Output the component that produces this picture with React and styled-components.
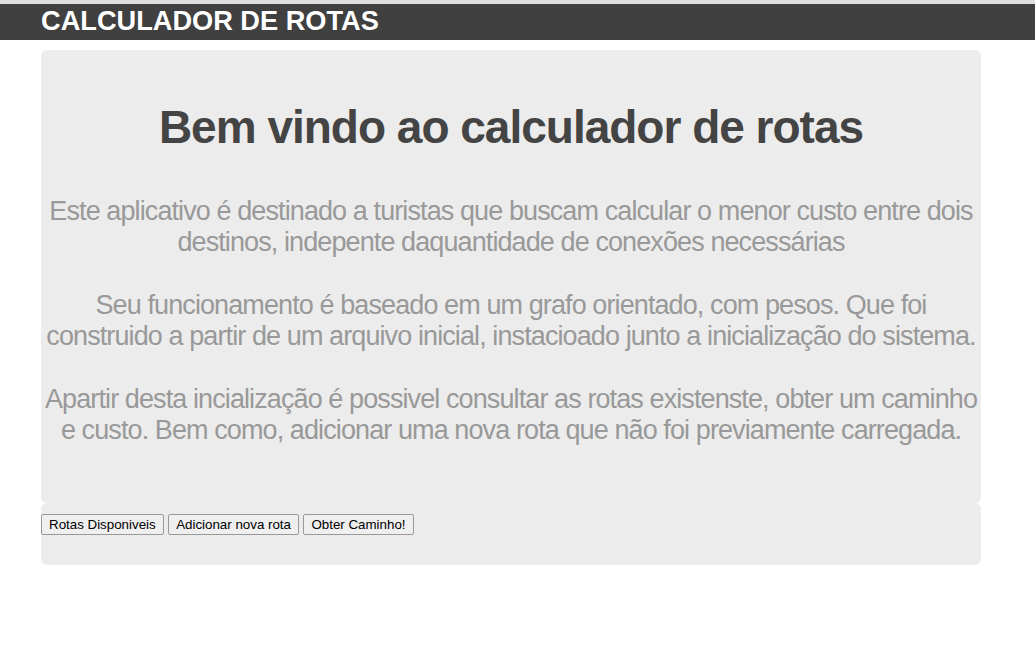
import React from 'react'
import styled, { createGlobalStyle } from 'styled-components'

const GlobalStyle = createGlobalStyle`
	body {
		margin: 0;
		font-family: "Liberation Sans", Arial, sans-serif;
		background: #fff;
	}
`

function App() {
	return (
		<>
			<GlobalStyle />
			<Header>
				<Header_Title>CALCULADOR DE ROTAS</Header_Title>
			</Header>
			<Container>
				<Hero>
					<Hero_H1>Bem vindo ao calculador de rotas</Hero_H1>
					<Hero_P>
						Este aplicativo é destinado a turistas que buscam calcular o menor custo entre dois
						destinos, indepente daquantidade de conexões necessárias
					</Hero_P>
					<Hero_P>
						Seu funcionamento é baseado em um grafo orientado, com pesos. Que foi
						construido a partir de um arquivo inicial, instacioado junto a inicialização do sistema.
					</Hero_P>
					<Hero_P>
						Apartir desta incialização é possivel consultar as rotas existenste, obter um caminho
						e custo. Bem como, adicionar uma nova rota que não foi previamente carregada.
					</Hero_P>
				</Hero>
				<Actions>
					<Nav_Link href="#">
						<Nav_Button>Rotas Disponiveis</Nav_Button>
					</Nav_Link>{' '}
					<Nav_Link href="#">
						<Nav_Button>Adicionar nova rota</Nav_Button>
					</Nav_Link>{' '}
					<Nav_Link href="#">
						<Nav_Button>Obter Caminho!</Nav_Button>
					</Nav_Link>
				</Actions>
			</Container>
		</>
	)
}

export default App

const Header = styled.div`
	border-top: 4px solid #dedede;
	background: #404040;
	height: 36px;
	padding-left: 41px;
`
const Header_Title = styled.h3`
	margin: 0;
	color: #fff;
	font-size: 27.2px;
	font-weight: bold;
	line-height: 33px;
`
const Container = styled.div`
	width: 940px;
	margin: 10px 0 0 41px;
`
const Hero = styled.div`
	background: #ececec;
	border-radius: 6px;
	padding: 42px 0 57px;
	text-align: center;
`
const Hero_H1 = styled.h1`
	margin: 0 0 34px;
	font-size: 46px;
	line-height: 70px;
	letter-spacing: -1px;
	font-weight: bold;
	color: #444;
`
const Hero_P = styled.p`
	margin: 0 0 32px;
	font-size: 27px;
	line-height: 31px;
	letter-spacing: -0.9px;
	color: #999;
	&:last-child {
		margin-bottom: 0;
	}
`
const Actions = styled.div`
	background: #ececec;
	border-radius: 6px;
	height: 51px;
	padding-top: 11px;
`
const Nav_Link = styled.a`
	color: #551a8b;
	font-size: 13px;
`
const Nav_Button = styled.button`
	font-family: "Liberation Sans", Arial, sans-serif;
	font-size: 13.33px;
	color: #000;
	background: #efefef;
	border: 1px solid #999;
	border-radius: 2px;
	height: 21px;
	padding: 0 7px;
`
